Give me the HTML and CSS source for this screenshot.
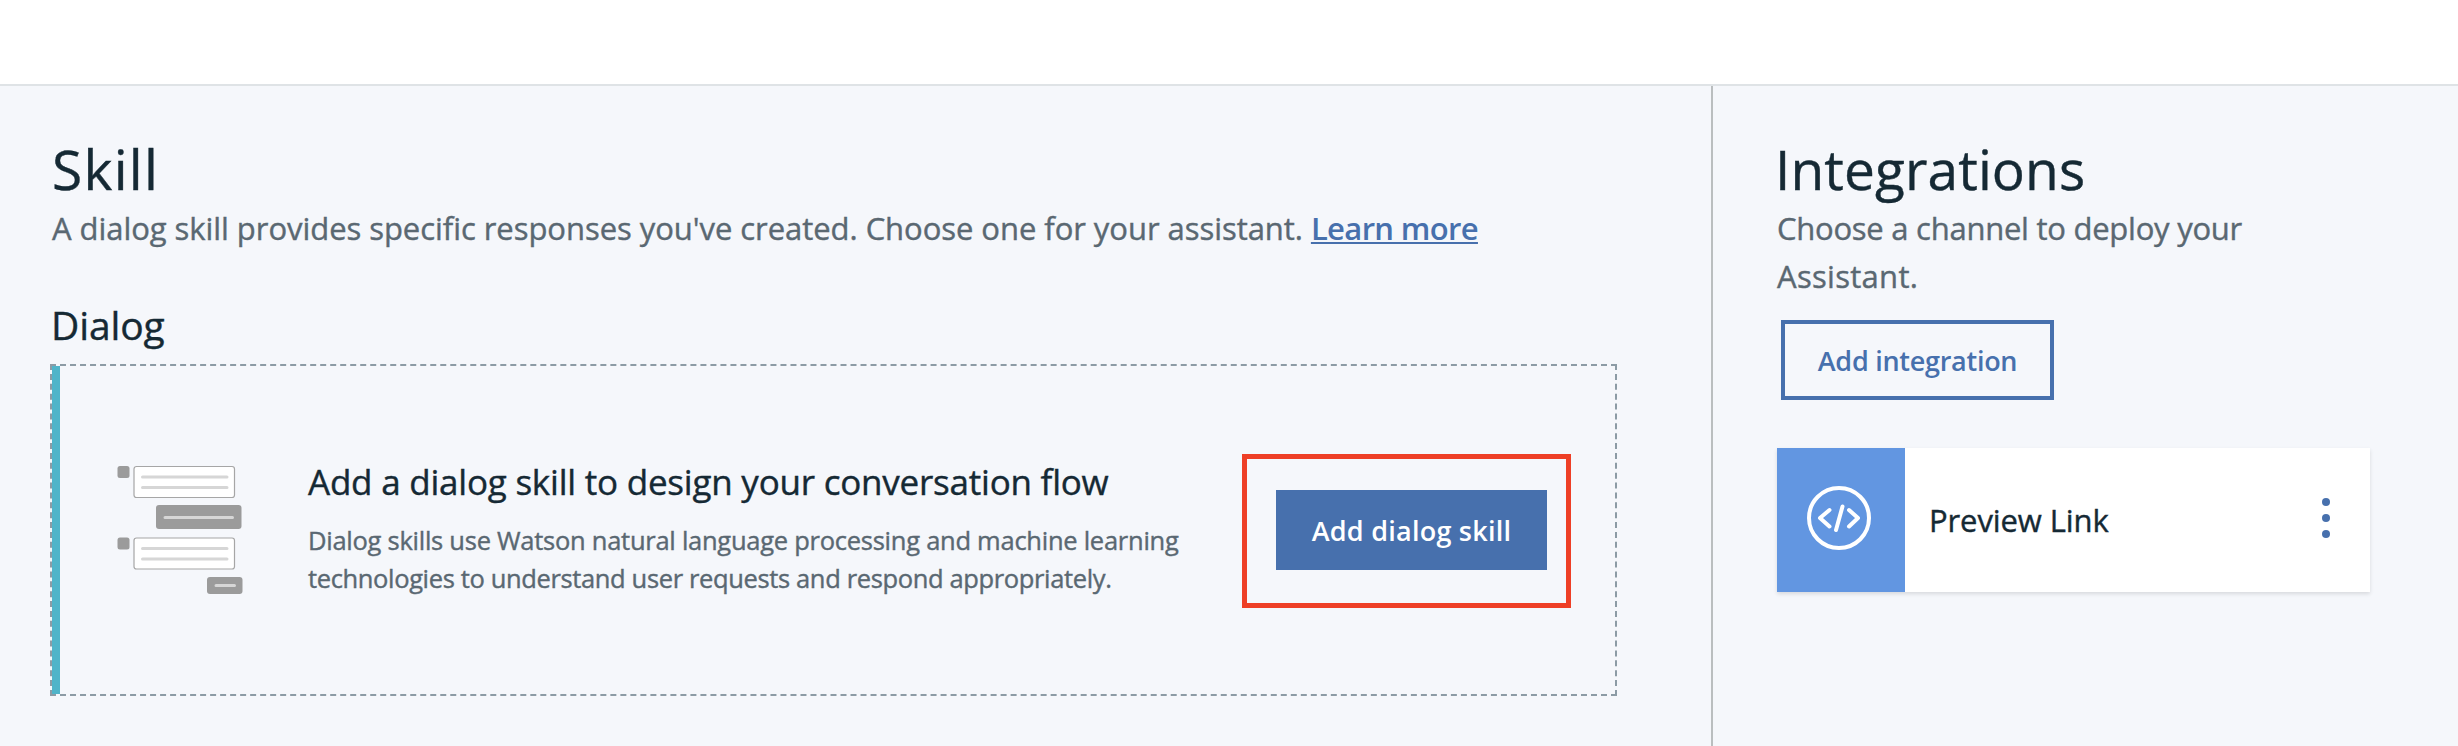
FILE: index.html
```html
<!DOCTYPE html>
<html lang="en">
<head>
<meta charset="utf-8">
<title>Assistant</title>
<link rel="stylesheet" href="styles.css">
</head>
<body>
<header class="topbar"></header>
<main class="content">
  <section class="skills">
    <h1 class="heading heading-skill">Skill</h1>
    <p class="subtitle">A dialog skill provides specific responses you've created. Choose one for your assistant. <a class="link" href="#">Learn more</a></p>
    <h2 class="section-title">Dialog</h2>
    <div class="skill-card">
      <svg class="illustration" width="128" height="130" viewBox="0 0 128 130" aria-hidden="true">
        <g fill="#9b9b9b">
          <rect x="0.5" y="1" width="12" height="12" rx="2.5"/>
          <rect x="39" y="40" width="85.500" height="24" rx="3"/>
          <rect x="0.500" y="72.500" width="12" height="12" rx="2.500"/>
          <rect x="90" y="112" width="35.500" height="17" rx="3"/>
        </g>
        <g fill="#fff" stroke="#a6a6a6" stroke-width="1.2">
          <rect x="17" y="1.500" width="100.500" height="31" rx="2.500"/>
          <rect x="17" y="73" width="100.500" height="31" rx="2.500"/>
        </g>
        <g stroke="#d6d6d6" stroke-width="3" stroke-linecap="round">
          <path d="M25.500 12H110M25.500 22.500H110M48 52.500H115.500M25.500 83.500H110M25.500 94H110M99 120.500H117.500"/>
        </g>
      </svg>
      <div class="skill-text">
        <h3 class="skill-name">Add a dialog skill to design your conversation flow</h3>
        <p class="skill-desc">Dialog skills use Watson natural language processing and machine learning<br><span class="desc-end">technologies to understand user requests and respond appropriately.</span></p>
      </div>
      <div class="highlight">
        <button class="button button-primary">Add dialog skill</button>
      </div>
    </div>
  </section>
  <aside class="integrations">
    <h1 class="heading heading-integrations">Integrations</h1>
    <p class="subtitle subtitle-narrow">Choose a channel to deploy your<br><span class="subtitle-end">Assistant.</span></p>
    <button class="button button-outline">Add integration</button>
    <div class="integration-card">
      <div class="integration-icon">
        <svg width="64" height="64" viewBox="0 0 64 64" fill="none" stroke="#fff" stroke-width="4" stroke-linecap="round" stroke-linejoin="round" aria-hidden="true">
          <circle cx="32" cy="32" r="30"/>
          <path d="M22.500 24L13 32L22.500 40.500M42 24L51 32L42 40.500M35.500 20.500L29 44"/>
        </svg>
      </div>
      <span class="integration-name">Preview Link</span>
      <svg class="menu" width="8" height="40" viewBox="0 0 8 40" fill="#4770ad" aria-label="Options">
        <circle cx="4" cy="4" r="4"/><circle cx="4" cy="20" r="4"/><circle cx="4" cy="36" r="4"/>
      </svg>
    </div>
  </aside>
</main>
</body>
</html>
```
FILE: styles.css
```css
* { box-sizing: border-box; }

body {
  margin: 0;
  min-height: 746px;
  display: flex;
  flex-direction: column;
  background: #f5f7fb;
  color: #152934;
  font-family: "Open Sans", sans-serif;
  -webkit-text-stroke: 0.4px currentColor;
}

h1, h2, h3, p { margin: 0; font-weight: 400; }

.topbar {
  height: 86px;
  background: #fff;
  border-bottom: 2px solid #dfe3e6;
}

.content { flex: 1; display: flex; }

.skills {
  width: 1711px;
  padding: 51px 94px 0 52px;
}

.heading { font-size: 55px; line-height: 64px; }
.heading-skill { letter-spacing: 1.3px; }
.heading-integrations { margin-left: -2px; letter-spacing: 0.1px; }

.subtitle {
  margin-top: 3px;
  color: #5a6872;
  font-size: 31px;
  line-height: 48px;
  letter-spacing: -0.05px;
  white-space: nowrap;
}
.subtitle-narrow { letter-spacing: -0.25px; }
.subtitle-end { letter-spacing: 0.3px; }

.link {
  color: #4770ad;
  font-weight: 600;
  letter-spacing: -0.65px;
  text-decoration-thickness: 2px;
  text-underline-offset: 2px;
  text-decoration-skip-ink: none;
  -webkit-text-stroke: 0;
}

.section-title {
  margin: 49px 0 15px -1px;
  font-size: 39px;
  line-height: 48px;
  letter-spacing: -0.1px;
}

.skill-card {
  display: flex;
  align-items: center;
  height: 332px;
  margin-left: -2px;
  padding-right: 44px;
  border: 2px dashed #8c9ba5;
  box-shadow: inset 8px 0 #4fb4c9;
}

.illustration { flex: none; margin-left: 65px; }

.skill-text { margin-left: 63px; padding-bottom: 5px; white-space: nowrap; }

.skill-name { font-size: 35px; line-height: 48px; letter-spacing: -0.22px; }

.skill-desc {
  margin-top: 15px;
  color: #5a6872;
  font-size: 25.5px;
  line-height: 38px;
  letter-spacing: -0.26px;
}
.desc-end { letter-spacing: -0.36px; }

.highlight {
  margin: 2px 0 0 auto;
  padding: 31px 19px 33px 29px;
  border: 5px solid #ee3f26;
}

.button {
  display: block;
  height: 80px;
  padding: 0;
  border: 0;
  font: 600 27px "Open Sans", sans-serif;
  -webkit-text-stroke: 0;
}

.button-primary {
  width: 271px;
  background: #4770ad;
  color: #fff;
  letter-spacing: 0.25px;
}

.button-outline {
  width: 273px;
  margin: 20px 0 48px 4px;
  border: 4px solid #4770ad;
  background: transparent;
  color: #4770ad;
  letter-spacing: -0.27px;
}

.integrations {
  flex: 1;
  padding: 51px 88px 0 64px;
  border-left: 2px solid #babebf;
}

.integration-card {
  display: flex;
  align-items: center;
  height: 144px;
  background: #fff;
  box-shadow: 0 2px 4px rgba(0, 0, 0, 0.12);
}

.integration-icon {
  display: flex;
  align-items: center;
  width: 128px;
  height: 144px;
  padding: 0 0 4px 30px;
  background: #6296e1;
}

.integration-name { margin-left: 24px; font-size: 31px; line-height: 48px; letter-spacing: -0.1px; }

.menu { margin: 0 40px 4px auto; }
```
